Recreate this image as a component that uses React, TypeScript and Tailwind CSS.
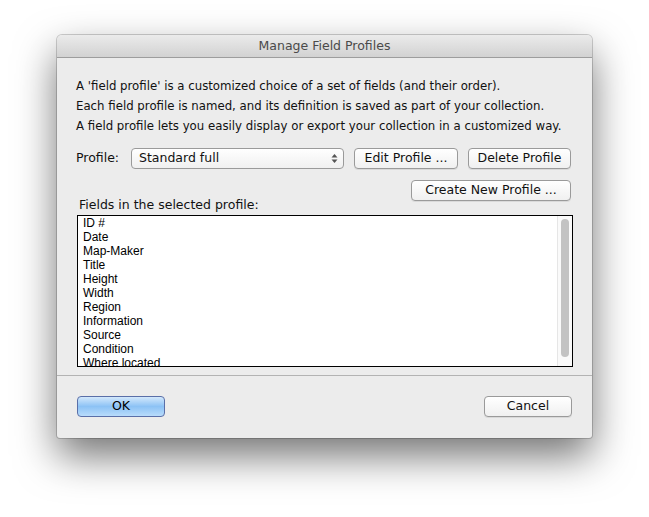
export default function App() {
    const fields = ['ID #', 'Date', 'Map-Maker', 'Title', 'Height', 'Width', 'Region', 'Information', 'Source', 'Condition', 'Where located'];
    const ui = { fontFamily: '"Lucida Grande", "DejaVu Sans", sans-serif' };

    const btn = "h-[21px] flex items-center justify-center rounded-[4px] border border-[#9a9a9a] bg-gradient-to-b from-white to-[#f0f0f0] text-[12.5px] text-[#111] shadow-[0_1px_0_rgba(0,0,0,0.08)]";

    return (
        <div className="min-h-[517px] w-[649px] bg-white pt-[35px] pl-[57px]" style={ui}>
            <div className="w-[535px] rounded-t-[5px] rounded-b-[3px] bg-[#ececec] shadow-[0_18px_40px_rgba(0,0,0,0.55),0_0_0_1px_rgba(0,0,0,0.18)] overflow-hidden">
                <div className="h-[23px] flex items-center justify-center border-b border-[#9d9d9d] bg-gradient-to-b from-[#ebebeb] to-[#d2d2d2] text-[12.5px] text-[#4a4a4a]">
                    Manage Field Profiles
                </div>

                <div className="px-[19px] pt-[18px] text-[11.75px] text-[#111]">
                    <p className="leading-[20px]">A 'field profile' is a customized choice of a set of fields (and their order).</p>
                    <p className="leading-[20px]">Each field profile is named, and its definition is saved as part of your collection.</p>
                    <p className="leading-[20px]">A field profile lets you easily display or export your collection in a customized way.</p>

                    <div className="mt-[12px] flex items-center text-[12.5px]">
                        <span className="w-[55px]">Profile:</span>
                        <div className="h-[21px] w-[213px] flex items-center justify-between rounded-[4px] border border-[#9a9a9a] bg-gradient-to-b from-white to-[#f0f0f0] pl-[7px] pr-[5px]">
                            <span>Standard full</span>
                            <svg width="7" height="11" viewBox="0 0 7 11">
                                <path d="M3.5 1 L6.5 4.5 H0.5 Z" fill="#555" />
                                <path d="M3.5 10 L6.5 6.5 H0.5 Z" fill="#555" />
                            </svg>
                        </div>
                        <button className={`${btn} ml-[10px] w-[104px]`}>Edit Profile ...</button>
                        <button className={`${btn} ml-[10px] w-[103px]`}>Delete Profile</button>
                    </div>

                    <div className="mt-[11px] flex justify-end pr-[2px]">
                        <button className={`${btn} w-[160px]`}>Create New Profile ...</button>
                    </div>

                    <div className="-mt-[4px] pl-[3px] leading-[16px] text-[12.5px]">Fields in the selected profile:</div>

                    <div className="mt-[2px] ml-[1px] w-[496px] h-[152px] flex border border-black bg-white overflow-hidden">
                        <div className="flex-1 pl-[5px] text-[12px] leading-[14px] text-black" style={{ fontFamily: '"Liberation Sans", Arial, sans-serif' }}>
                            {fields.map((f) => (
                                <div key={f}>{f}</div>
                            ))}
                        </div>
                        <div className="w-[15px] border-l border-[#e6e6e6] bg-[#fafafa] pt-[3px] pl-[3px]">
                            <div className="w-[8px] h-[138px] rounded-full bg-[#c3c3c3]" />
                        </div>
                    </div>
                </div>

                <div className="mt-[8px] border-t border-[#b3b3b3]" />

                <div className="flex justify-between px-[20px] pt-[20px] pb-[21px] text-[12.5px]">
                    <button className="h-[21px] w-[88px] flex items-center justify-center rounded-[4px] border border-[#5a6fa8] bg-gradient-to-b from-[#d3e8fb] via-[#8cc2f5] to-[#b9dcfb] text-black">
                        OK
                    </button>
                    <button className={`${btn} w-[88px]`}>Cancel</button>
                </div>
            </div>
        </div>
    );
}
